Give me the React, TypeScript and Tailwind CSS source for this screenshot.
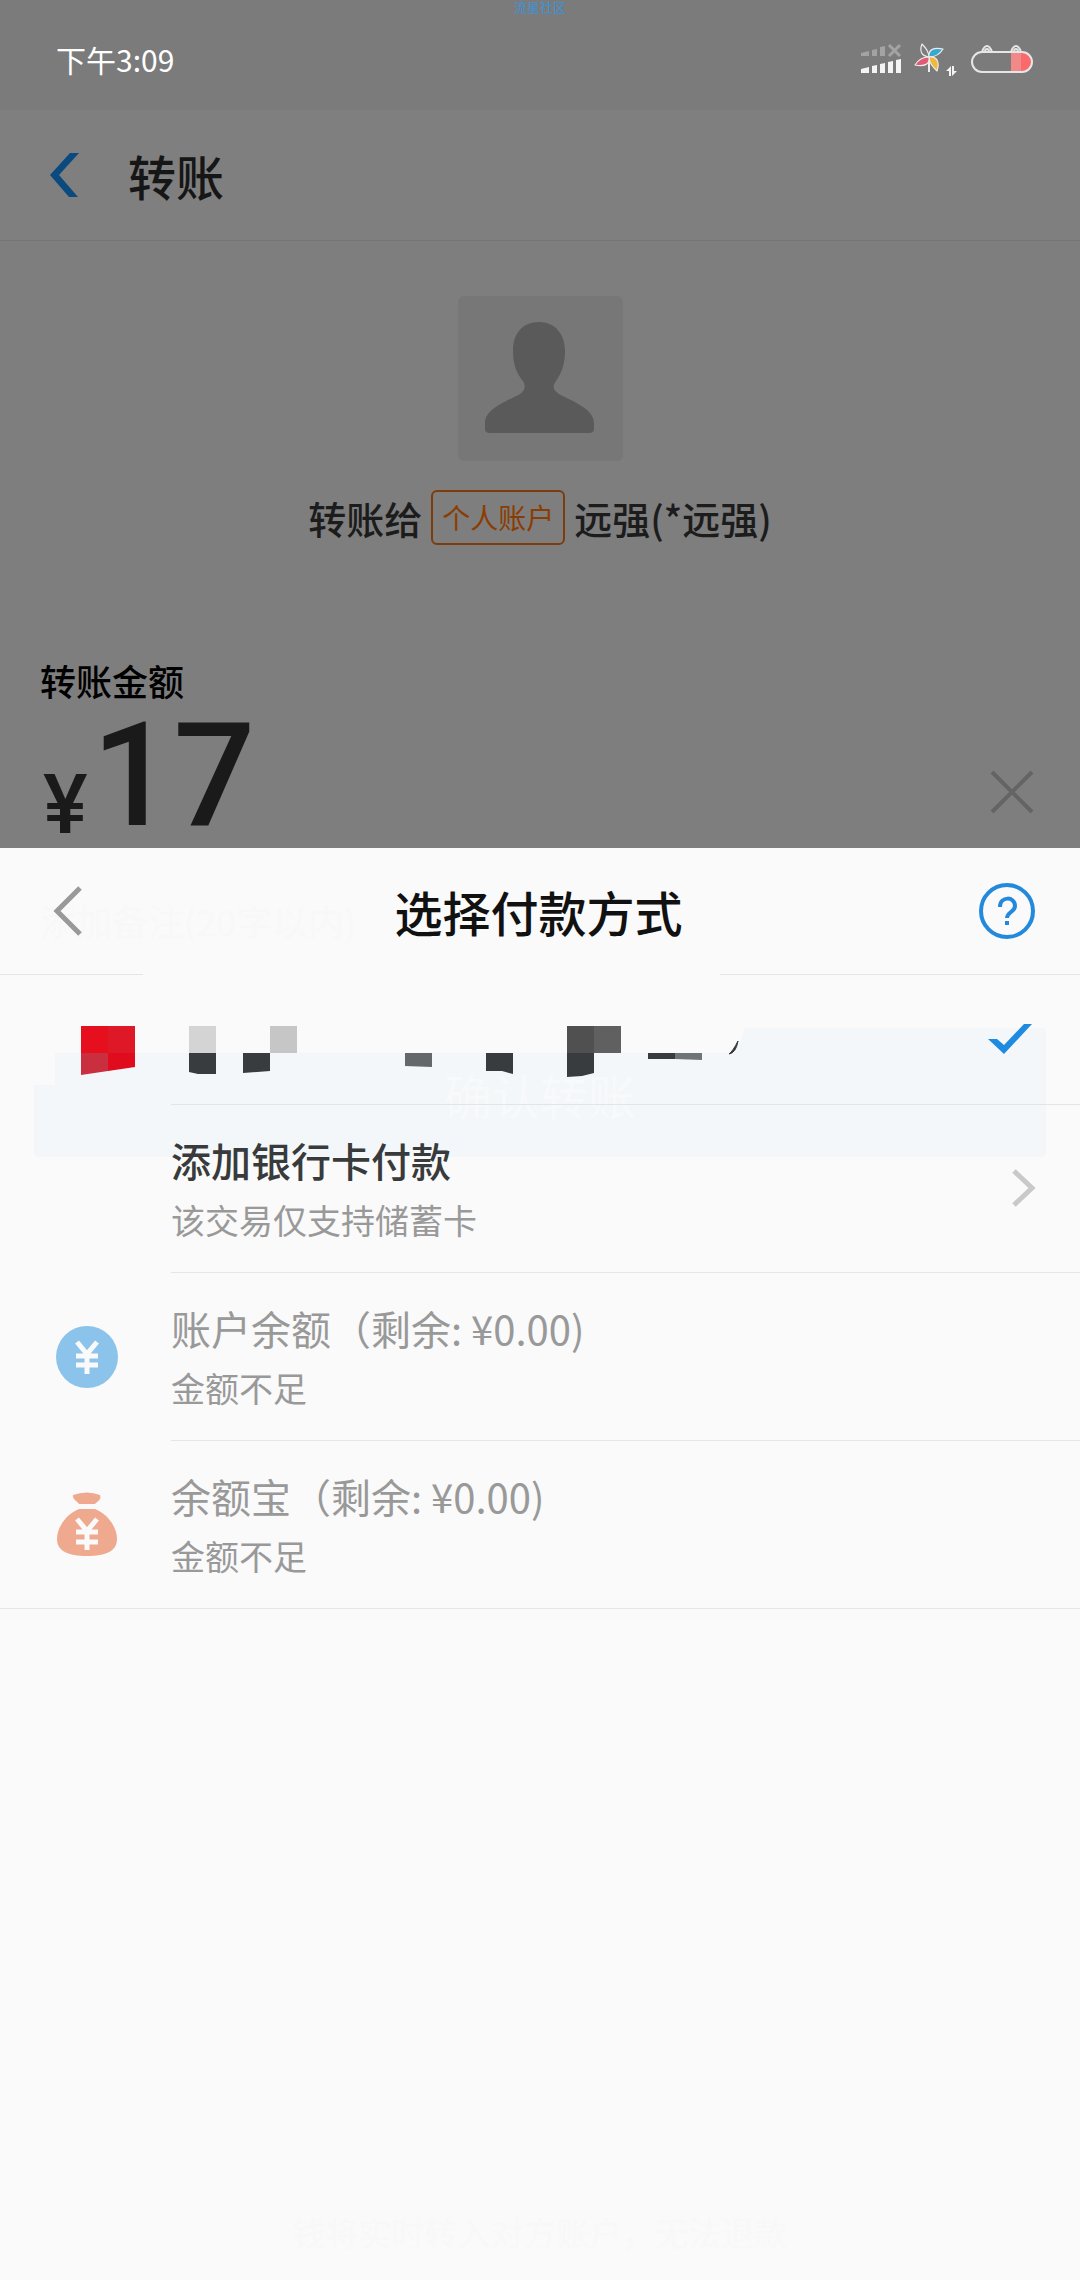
import type { ReactNode } from "react";

const HIDDEN_BLOCKS = [
  ["#e60f1e", "1,26 28,26 28,53 1,53"],
  ["#df1827", "28,26 55,26 55,53 28,53"],
  ["#c92f3f", "1,53 28,53 28,71 1,75"],
  ["#e00b1d", "28,53 55,53 55,67 28,71"],
  ["#d4d4d4", "109,26 136,26 136,53 109,53"],
  ["#383c3f", "109,53 136,53 136,74 118,74 109,72"],
  ["#383c3f", "163,53 190,53 190,71 163,73"],
  ["#c6c6c6", "190,26 217,26 217,53 190,53"],
  ["#64686b", "325,53 352,53 352,67 325,66"],
  ["#383c3f", "406,53 433,53 433,74 422,71 406,71"],
  ["#505050", "487,26 514,26 514,53 487,53"],
  ["#606060", "514,26 541,26 541,53 514,53"],
  ["#383c3f", "487,53 514,53 514,73 502,76 487,77"],
  ["#383c3f", "568,53 595,53 595,59 568,59"],
  ["#6f7477", "595,53 622,53 622,60 595,59"],
];

const BALANCES = [
  { title: "账户余额（剩余: ¥0.00)", note: "金额不足", icon: <CoinIcon /> },
  { title: "余额宝（剩余: ¥0.00)", note: "金额不足", icon: <BagIcon /> },
];

function SignalIcon() {
  return (
    <svg width="42" height="32" viewBox="0 0 42 32" aria-hidden="true">
      <g fill="#a3a3a3">
        <path d="M1 10l8-2v5H1zM12 7l5-1v7h-5zM20 4l5-1v10h-5z" />
        <path d="M29 2l11 11M40 2L29 13" stroke="#a3a3a3" strokeWidth="3" />
      </g>
      <path
        d="M1 26l8-2v6H1zM12 23l5-1v8h-5zM20 21l5-1v10h-5zM28 19l5-1v12h-5zM36 17l5-1v14h-5z"
        fill="#f4f4f4"
      />
    </svg>
  );
}

function PinwheelIcon() {
  return (
    <svg width="44" height="36" viewBox="0 0 44 36" aria-hidden="true">
      <g stroke="#ececec" strokeWidth="1.2" strokeLinejoin="round">
        <path d="M15 16V31" strokeWidth="2" />
        <path d="M15 16C8 15 5 11 8 3c4 4 7 8 7 13z" fill="#7c7c7c" />
        <path d="M15 16c-1-7 4-10 14-8-3 5-8 8-14 8z" fill="#37a9cf" />
        <path d="M15 16c8-1 11 5 8 14-4-4-8-8-8-14z" fill="#efb93d" />
        <path d="M15 16c1 7-4 10-14 8 3-5 8-8 14-8z" fill="#e25b72" />
      </g>
      <path d="M32 30l5-5v10h-2v-5zM38 25l2 0v5h3l-5 5z" fill="#f4f4f4" />
    </svg>
  );
}

function BatteryIcon() {
  return (
    <svg width="64" height="30" viewBox="0 0 64 30" aria-hidden="true">
      <path d="M41 8h11v20H41z" fill="#f08a88" />
      <path d="M51 8h1a10 10 0 010 20h-1z" fill="#fa6a6c" />
      <g fill="none" stroke="#e6e6e6" strokeWidth="2">
        <rect x="2" y="8" width="60" height="20" rx="10" />
        <path d="M12 8c1-3 3-6 5-6s4 3 5 6M15 8c0-4 4-4 4 0M41 8c1-3 3-6 5-6s4 3 5 6M44 8c0-4 4-4 4 0" />
      </g>
    </svg>
  );
}

function AvatarIcon() {
  return (
    <svg width="165" height="165" viewBox="0 0 165 165" aria-hidden="true">
      <path
        d="M81 26C64 26 55 38 55 55c0 14 4 23 10 30 3 6 2 9-3 13-10 6-35 14-35 29v6q0 4 5 4h99q5 0 5-4v-6c0-15-25-23-35-29-6-4-7-7-3-13 5-7 9-16 9-30 0-17-10-29-26-29z"
        fill="#5a5a5a"
      />
    </svg>
  );
}

function CoinIcon() {
  return (
    <svg width="62" height="64" viewBox="0 0 62 64" aria-hidden="true">
      <circle cx="31" cy="32" r="31" fill="#8cc3eb" />
      <path
        d="M21 17l10 12 10-12M20 31h22M20 40h22M31 29v20"
        fill="none"
        stroke="#fafafa"
        strokeWidth="5"
      />
    </svg>
  );
}

function BagIcon() {
  return (
    <svg width="62" height="66" viewBox="0 0 62 66" aria-hidden="true">
      <g fill="#efa98f">
        <path d="M17 3q14-5 27 0c2 5-3 6-5 9H23c-2-3-7-5-6-9z" />
        <path d="M23 17h16c11 4 22 17 22 30 0 12-11 17-30 17S1 59 1 47c0-13 11-26 22-30z" />
      </g>
      <path
        d="M21 27l10 12 10-12M20 40h22M20 50h22M31 38v20"
        fill="none"
        stroke="#fafafa"
        strokeWidth="5"
      />
    </svg>
  );
}

function MethodRow({
  title,
  note,
  icon,
  end,
  disabled,
}: {
  title: string;
  note: string;
  icon?: ReactNode;
  end?: ReactNode;
  disabled?: boolean;
}) {
  return (
    <button
      disabled={disabled}
      className="flex h-[167px] w-full items-center pr-11 text-left"
    >
      <span className="flex w-[171px] shrink-0 justify-start pl-14">{icon}</span>
      <span className="flex-1 pt-[2px]">
        <span
          className={`block text-[40px] leading-[60px] ${
            disabled ? "text-[#999]" : "font-medium text-[#383a3c]"
          }`}
        >
          {title}
        </span>
        <span className="block text-[34px] leading-[60px] text-[#999]">{note}</span>
      </span>
      {end}
    </button>
  );
}

export default function App() {
  return (
    <main className="flex min-h-screen flex-col bg-[#7e7e7e] font-['Noto_Sans_CJK_SC',sans-serif]">
      <div className="relative flex h-[110px] items-center justify-between bg-[#7b7b7b] pl-14 pr-[46px] pt-2">
        <p className="absolute inset-x-0 top-0 text-center text-[13px] leading-[13px] text-[#3b93d6]">
          流星社区
        </p>
        <p className="text-[30px] leading-10 text-white">下午3:09</p>
        <div className="flex items-center gap-3">
          <SignalIcon />
          <PinwheelIcon />
          <BatteryIcon />
        </div>
      </div>

      <header className="flex h-[131px] items-center gap-12 border-b border-[#757575] bg-[#7f7f7f] pl-12">
        <button aria-label="返回">
          <svg width="32" height="44" viewBox="0 0 32 44" aria-hidden="true">
            <path d="M22 0h9L11 22l19 22h-9L2 22z" fill="#0a4a7e" />
          </svg>
        </button>
        <h1 className="text-[48px] font-medium leading-[60px] text-[#161616]">转账</h1>
      </header>

      <section className="flex flex-col items-center pt-[55px]">
        <div className="rounded-md bg-[#777]">
          <AvatarIcon />
        </div>
        <p className="mt-[29px] flex items-center gap-[9px] text-[38px] font-medium leading-[55px] text-[#1c1c1c]">
          转账给
          <span className="rounded-md border-2 border-[#7d3c0c] px-[9px] text-[28px] font-normal leading-[51px] text-[#8a3d03]">
            个人账户
          </span>
          远强(*远强)
        </p>
      </section>

      <section className="mt-[115px] px-10">
        <label
          htmlFor="amount"
          className="block text-[36px] font-medium leading-10 text-black"
        >
          转账金额
        </label>
        <div className="flex h-[148px] items-end pb-1 text-[#1a1a1a]">
          <span className="pl-[3px] font-['Roboto',sans-serif] text-[84px] font-medium leading-[78px]">
            ¥
          </span>
          <input
            id="amount"
            defaultValue="17"
            inputMode="decimal"
            className="mb-1 h-[130px] min-w-0 flex-1 bg-transparent pl-1 font-['Roboto',sans-serif] text-[144px] font-medium leading-[130px] outline-none"
          />
          <button aria-label="清除金额" className="mb-[30px] mr-[6px]">
            <svg width="44" height="44" viewBox="0 0 44 44" aria-hidden="true">
              <path d="M2 2l40 40M42 2L2 42" stroke="#646464" strokeWidth="4" />
            </svg>
          </button>
        </div>
      </section>

      <section
        aria-labelledby="sheet-title"
        className="relative isolate flex flex-1 flex-col bg-[#fafafa]"
      >
        {/* the page behind shows faintly through the sheet */}
        <p className="absolute left-10 top-[47px] -z-10 text-[36px] leading-[50px] text-[#f8f8f8]">
          添加备注(20字以内)
        </p>
        <div className="absolute inset-x-[34px] top-[180px] -z-10 h-[129px]">
          <svg
            className="h-full w-full"
            viewBox="0 0 1013 129"
            preserveAspectRatio="none"
            aria-hidden="true"
          >
            <path
              d="M0 57H21V25H697Q707 20 711 0H1008Q1013 0 1013 5V124Q1013 129 1008 129H5Q0 129 0 124z"
              fill="#f3f7fa"
            />
          </svg>
          <p className="absolute inset-x-0 top-[36px] text-center text-[48px] leading-[60px] text-[#f8f9fa]">
            确认转账
          </p>
        </div>

        <div className="flex h-[126px] items-center justify-between pl-[52px] pr-[45px]">
          <button aria-label="返回">
            <svg width="46" height="50" viewBox="0 0 46 50" aria-hidden="true">
              <path d="M28 2L5 25l23 23" fill="none" stroke="#999" strokeWidth="5" />
            </svg>
          </button>
          <h2 id="sheet-title" className="text-[48px] font-medium leading-[60px] text-[#111]">
            选择付款方式
          </h2>
          <button aria-label="帮助">
            <svg width="56" height="56" viewBox="0 0 56 56" fill="none" aria-hidden="true">
              <circle cx="28" cy="28" r="26" stroke="#2389dc" strokeWidth="4" />
              <path
                d="M21 24c0-11 15-11 15-1 0 6-8 6-8 12M28 38v4"
                stroke="#2389dc"
                strokeWidth="4"
              />
            </svg>
          </button>
        </div>
        <div className="flex justify-between">
          <hr className="w-[143px] border-[#e5e5e5]" />
          <hr className="w-1/3 border-[#e5e5e5]" />
        </div>

        <button
          aria-label="已选付款方式"
          className="flex h-[129px] w-full items-center justify-between pl-20 pr-12"
        >
          <svg width="664" height="80" viewBox="0 0 664 80" aria-hidden="true">
            {HIDDEN_BLOCKS.map(([fill, points]) => (
              <polygon key={points} points={points} fill={fill} />
            ))}
            <path d="M658 41q-2 12-9 13 4-3 9-13z" fill="#383c3f" stroke="#383c3f" />
          </svg>
          <svg width="44" height="32" viewBox="0 0 44 32" aria-hidden="true">
            <path d="M0 15h9l7 6L36 0h8L16 30z" fill="#1f8be0" />
          </svg>
        </button>
        <hr className="ml-[171px] border-[#e1e5e7]" />

        <MethodRow
          title="添加银行卡付款"
          note="该交易仅支持储蓄卡"
          end={
            <svg width="24" height="40" viewBox="0 0 24 40" aria-hidden="true">
              <path d="M2 2l18 17L2 36" fill="none" stroke="#c9c9c9" strokeWidth="5" />
            </svg>
          }
        />
        {BALANCES.map((method) => (
          <div key={method.title}>
            <hr className="ml-[171px] border-[#e5e5e5]" />
            <MethodRow {...method} disabled />
          </div>
        ))}
        <hr className="border-[#e5e5e5]" />

        <p className="mt-auto pb-7 text-center text-[33px] leading-10 text-[#f8f8f8]">
          钱将实时转入对方账户，无法退款
        </p>
      </section>
    </main>
  );
}
